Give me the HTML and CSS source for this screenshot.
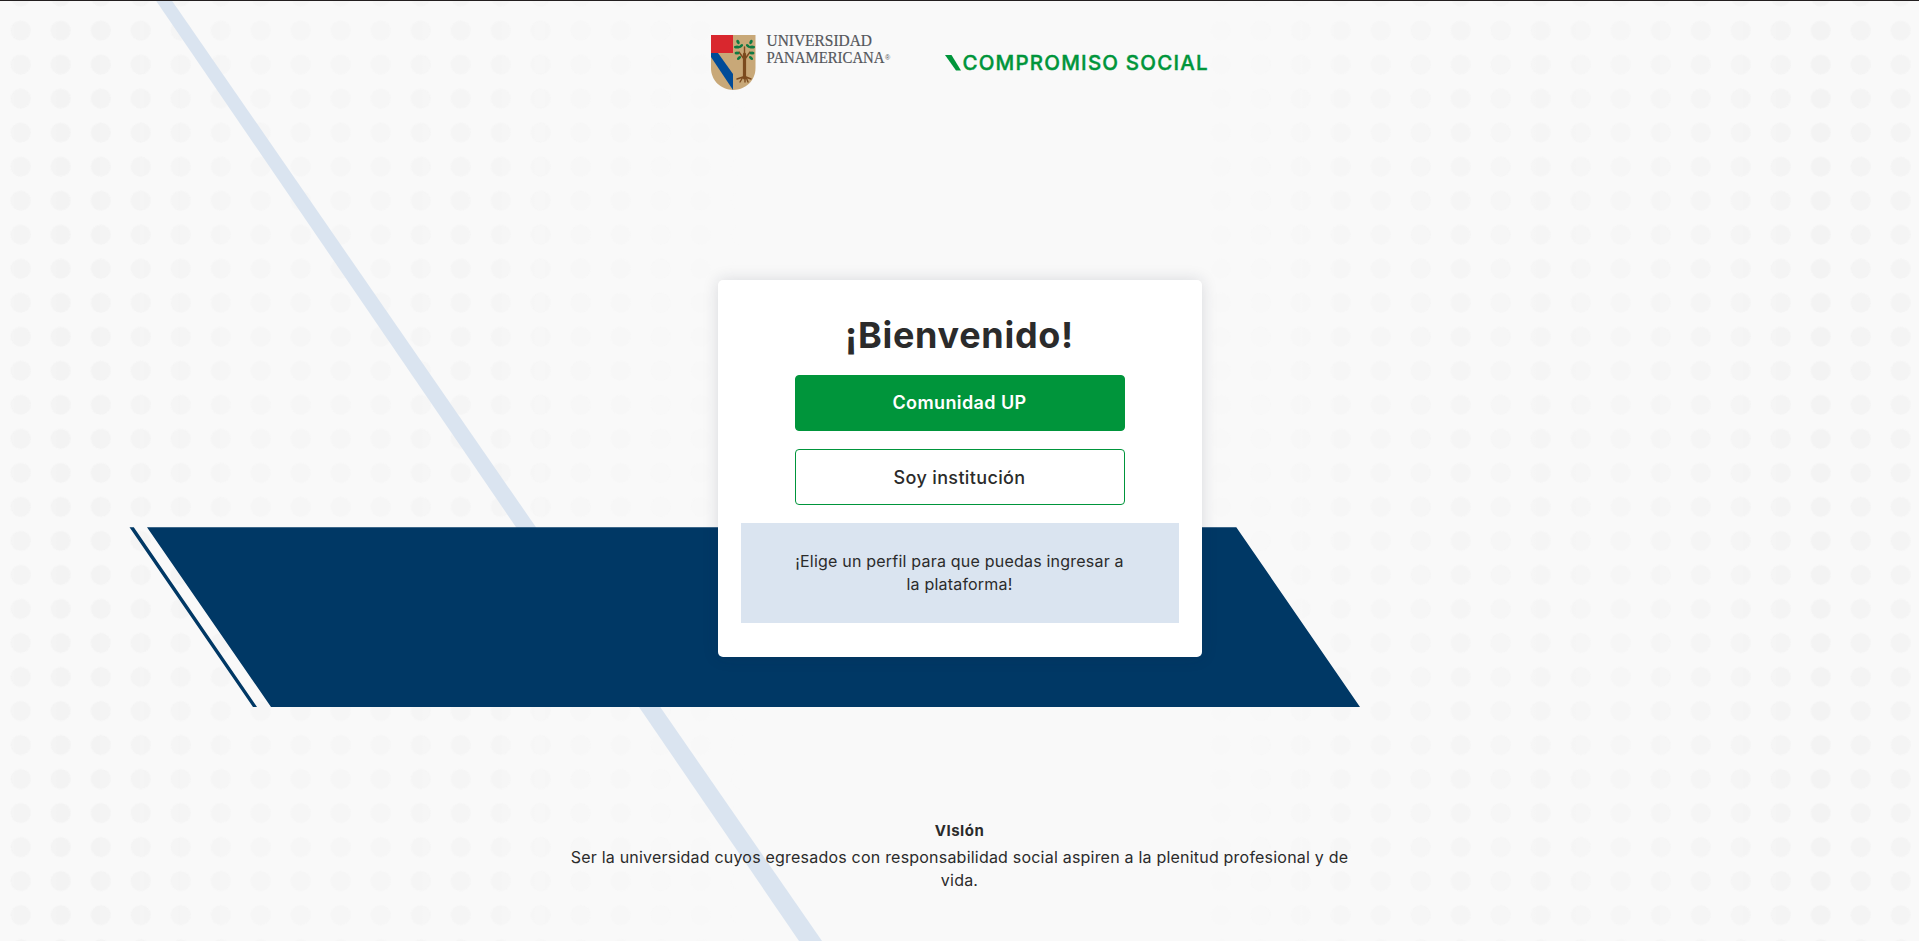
FILE: index.html
```html
<!DOCTYPE html>
<html lang="es">
<head>
<meta charset="utf-8">
<title>Compromiso Social</title>
<link rel="stylesheet" href="styles.css">
</head>
<body>
<svg class="backdrop" viewBox="0 0 1919 941" preserveAspectRatio="none" aria-hidden="true">
  <defs>
    <pattern id="dots" x="0.7" y="13.6" width="40" height="34.02" patternUnits="userSpaceOnUse">
      <circle cx="20" cy="17" r="10" fill="#f3f3f3"/>
    </pattern>
    <linearGradient id="fade">
      <stop offset="0" stop-color="#fff" stop-opacity=".85"/>
      <stop offset=".04" stop-color="#fff"/>
      <stop offset=".07" stop-color="#fff" stop-opacity=".9"/>
      <stop offset=".12" stop-color="#fff" stop-opacity=".5"/>
      <stop offset=".2" stop-color="#fff" stop-opacity=".5"/>
      <stop offset=".24" stop-color="#fff" stop-opacity=".65"/>
      <stop offset=".31" stop-color="#fff" stop-opacity=".3"/>
      <stop offset=".39" stop-color="#fff" stop-opacity="0"/>
      <stop offset=".62" stop-color="#fff" stop-opacity="0"/>
      <stop offset=".68" stop-color="#fff" stop-opacity=".3"/>
      <stop offset=".75" stop-color="#fff" stop-opacity=".65"/>
      <stop offset=".85" stop-color="#fff" stop-opacity=".5"/>
      <stop offset=".95" stop-color="#fff"/>
      <stop offset="1" stop-color="#fff" stop-opacity=".8"/>
    </linearGradient>
    <mask id="sides"><rect width="1919" height="941" fill="url(#fade)"/></mask>
  </defs>
  <rect width="1919" height="941" fill="url(#dots)" mask="url(#sides)"/>
  <path d="M155.5 0h16L822 941h-23z" fill="#dae4f0"/>
  <path d="M147 527.200h1089.3L1360 707H271zM129.500 527.200h4.300L257 707h-4z" fill="#003865"/>
  <path d="M0 .5h1919" stroke="#231f20"/>
</svg>
<div class="page">
  <header class="brand">
    <svg class="brand-up" width="180" height="58" viewBox="0 0 180 58">
      <path d="M1 1h44.500v33c0 13-10 21.500-22.250 22C11 55.500 1 47 1 34z" fill="#c8a878"/>
      <path d="M1 1h22v18H1z" fill="#d9272e"/>
      <path d="M1 19h7l15 21v16L1 23z" fill="#004b98"/>
      <g fill="none" stroke="#7b4a1e" stroke-linecap="round">
        <path d="M34.500 20v24" stroke-width="3.200"/>
        <path d="M34 25l-5-7M35 25l5-7M34.500 22v-9M33 43l-6 2M33 43l-3 5M35 43v5M36 43l5 2M36 43l2 5" stroke-width="1.400"/>
      </g>
      <g fill="#0f7a43">
        <ellipse cx="28" cy="8" rx="2.300" ry="1.500" transform="rotate(60 28 8)"/><ellipse cx="27" cy="13" rx="3" ry="1.500"/><ellipse cx="31" cy="12" rx="2.500" ry="1.300" transform="rotate(-40 31 12)"/><ellipse cx="27" cy="19" rx="2.500" ry="1.600"/><ellipse cx="29" cy="24" rx="2.500" ry="1.400" transform="rotate(-45 29 24)"/><ellipse cx="41" cy="8" rx="2.300" ry="1.500" transform="rotate(-60 41 8)"/><ellipse cx="38" cy="12" rx="2.500" ry="1.300" transform="rotate(40 38 12)"/><ellipse cx="42" cy="13" rx="3" ry="1.500"/><ellipse cx="42" cy="19" rx="2.500" ry="1.600"/><ellipse cx="41" cy="24" rx="2.500" ry="1.400" transform="rotate(45 41 24)"/>
      </g>
      <g class="wordmark"><text x="56.500" y="12" textLength="105.500" lengthAdjust="spacingAndGlyphs">UNIVERSIDAD</text><text x="56.500" y="29" textLength="118" lengthAdjust="spacingAndGlyphs">PANAMERICANA</text><text class="reg" x="175" y="25.500">®</text></g>
    </svg>
    <svg class="brand-social" width="264" height="22" viewBox="0 0 264 22">
      <path d="M0 3h6.500l9.500 15.500h-5z" fill="#00953b"/>
      <text x="17.500" y="18" textLength="245" lengthAdjust="spacing">COMPROMISO SOCIAL</text>
    </svg>
  </header>
  <main class="card">
    <h1>¡Bienvenido!</h1>
    <button class="btn btn-solid">Comunidad UP</button>
    <button class="btn btn-line">Soy institución</button>
    <p class="notice">¡Elige un perfil para que puedas ingresar a<br>la plataforma!</p>
  </main>
  <footer class="vision">
    <h2>VIsIón</h2>
    <p>Ser la universidad cuyos egresados con responsabilidad social aspiren a la plenitud profesional y de<br>vida.</p>
  </footer>
</div>
</body>
</html>
```
FILE: styles.css
```css
* { box-sizing: border-box; }
body {
  margin: 0;
  height: 941px;
  overflow: hidden;
  background: #f9f9f9;
  color: #2b2b2b;
  font: 16px/23px Inter, "Open Sans", sans-serif;
  letter-spacing: .21px;
}
.backdrop { position: absolute; inset: 0; width: 100%; height: 941px; z-index: -1; }
.page { display: flex; flex-direction: column; align-items: center; padding-top: 34px; }
.brand { display: flex; gap: 55px; width: 499px; height: 58px; letter-spacing: 0; }
.brand svg { display: block; flex: none; overflow: visible; }
.brand-social { margin-top: 18px; }
.brand-social text { font: 500 20.500px Inter, sans-serif; fill: #00953b; stroke: #00953b; stroke-width: .4px; }
.wordmark text { font: 16px "Liberation Serif", serif; fill: #54565b; stroke: #54565b; stroke-width: .2px; }
.wordmark .reg { font: 7px "Liberation Sans", sans-serif; stroke: none; }
.card {
  display: flex;
  flex-direction: column;
  align-items: center;
  width: 484px;
  height: 377px;
  margin-top: 188px;
  padding: 33px 23px 34px;
  background: #fff;
  border-radius: 5px;
  box-shadow: 0 0 16px rgba(30, 35, 60, .15);
}
h1 { margin: 0 0 18px; font-size: 36px; line-height: 44px; font-weight: 700; letter-spacing: .7px; }
.btn {
  width: 330px;
  height: 56px;
  margin: 0 0 18px;
  border: 1px solid #00953b;
  border-radius: 4px;
  font: 500 18px/24px Inter, sans-serif;
  letter-spacing: .35px;
  color: #2b2b2b;
  background: #fff;
}
.btn-solid { background: #00953b; color: #fff; font-weight: 600; letter-spacing: .4px; }
.btn-line { padding-top: 3px; }
.notice { width: 438px; height: 100px; margin: 0; padding: 27px 0 0; background: #dae4f0; text-align: center; }
.vision { margin-top: 162px; text-align: center; }
.vision h2 { margin: 0 0 4px; font-size: 15px; line-height: 23px; font-weight: 700; letter-spacing: .5px; }
.vision p { margin: 0; white-space: nowrap; }
```
